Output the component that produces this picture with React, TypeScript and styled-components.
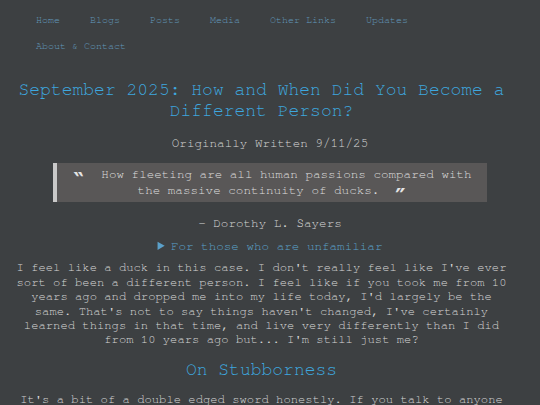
import styled, { createGlobalStyle } from "styled-components";

const GlobalStyle = createGlobalStyle`
  html, body {
    margin: 0;
    padding: 0;
    background: #3d4042;
  }

  body {
    font-family: "Nimbus Mono PS", "Nimbus Mono L", "FreeMono", "Courier", "Courier New", "Liberation Mono", monospace;
    color: #d6d6d6;
  }
`;

const NAV_LINKS = ["Home", "Blogs", "Posts", "Media", "Other Links", "Updates", "About & Contact"];

export default function App() {
  return (
    <>
      <GlobalStyle />
      <Nav>
        <NavList>
          {NAV_LINKS.map((link) => (
            <NavItem key={link}>
              <NavLink href="#">{link}</NavLink>
            </NavItem>
          ))}
        </NavList>
      </Nav>

      <Main>
        <Prose>
          <Title>September 2025: How and When Did You Become a Different Person?</Title>
        </Prose>

        <Meta>Originally Written 9/11/25</Meta>

        {/* Quote */}
        <Quote>
          <Mark $side="open">‶</Mark>
          How fleeting are all human passions compared with the massive continuity of ducks.
          <Mark $side="close">″</Mark>
        </Quote>
        <Attribution>- Dorothy L. Sayers</Attribution>

        <Details>
          <Summary>For those who are unfamiliar</Summary>
        </Details>

        {/* Content */}
        <Prose>
          <Paragraph>
            I feel like a duck in this case. I don't really feel like I've ever sort of been a different person. I feel
            like if you took me from 10 years ago and dropped me into my life today, I'd largely be the same. That's not
            to say things haven't changed, I've certainly learned things in that time, and live very differently than I
            did from 10 years ago but... I'm still just me?
          </Paragraph>
          <Heading>On Stubborness</Heading>
          <Paragraph>
            It's a bit of a double edged sword honestly. If you talk to anyone who knows me well, they'll tell you I'm
            stubborn.
          </Paragraph>
        </Prose>
      </Main>
    </>
  );
}

const Nav = styled.nav`
  padding: 8px 0 0 21px;
`;

const NavList = styled.ul`
  display: flex;
  flex-wrap: wrap;
  list-style: none;
  margin: 0;
  padding: 0;
`;

const NavItem = styled.li`
  padding: 6px 15px;
  font-size: 10px;
  line-height: 13.7px;
`;

const NavLink = styled.a`
  color: #6298bb;
  text-decoration: none;
`;

const Main = styled.main`
  display: flex;
  flex-direction: column;
`;

const Prose = styled.div`
  padding: 0 27px 0 10px;
  text-align: center;
`;

const Title = styled.h1`
  margin: 21px 0 0;
  font-size: 18px;
  line-height: 21px;
  font-weight: normal;
  color: #3ea7df;
`;

const Meta = styled.p`
  margin: 15px 0 0;
  font-size: 12.6px;
  line-height: 14px;
  text-align: center;
`;

const Quote = styled.blockquote`
  margin: 12px 53px 0;
  padding: 3.5px 14px;
  background: #595757;
  border-left: 4px solid #c9c9c9;
  font-size: 12.6px;
  line-height: 15.7px;
  text-align: center;
  color: #dedede;
`;

const Mark = styled.span<{ $side: "open" | "close" }>`
  display: inline-block;
  width: 12px;
  font-family: "DejaVu Sans", sans-serif;
  font-size: 23px;
  font-weight: bold;
  line-height: 0;
  vertical-align: -11px;
  color: #e4e4e4;
  margin: ${({ $side }) => ($side === "open" ? "0 17px 0 0" : "0 0 0 15px")};
`;

const Attribution = styled.p`
  margin: 14px 0 0;
  font-size: 12.6px;
  line-height: 15px;
  text-align: center;
`;

const Details = styled.details`
  margin: 8px 0 0;
  font-size: 12.6px;
  line-height: 15px;
  text-align: center;
`;

const Summary = styled.summary`
  color: #5ba0c9;
  cursor: pointer;
`;

const Paragraph = styled.p`
  margin: 6.5px 0 0;
  font-size: 12.2px;
  line-height: 14.4px;
`;

const Heading = styled.h2`
  margin: 13px 0 0;
  font-size: 18px;
  line-height: 21px;
  font-weight: normal;
  color: #3ea7df;

  & + p {
    margin-top: 11px;
  }
`;
